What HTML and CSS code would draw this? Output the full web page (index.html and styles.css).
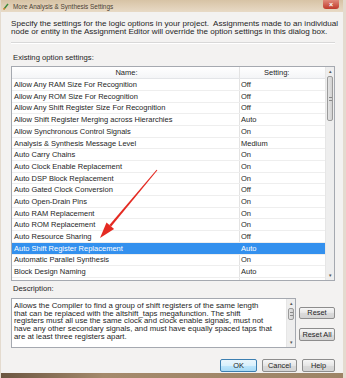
FILE: index.html
```html
<!DOCTYPE html>
<html lang="en">
  <head>
    <meta charset="UTF-8" />
    <title>More Analysis &amp; Synthesis Settings</title>
    <link rel="stylesheet" href="styles.css">
  </head>
  <body>
    <div class="window">
      <!-- Title bar -->
      <div class="titlebar">
        <svg class="app-icon" width="7" height="7" viewBox="0 0 7 7">
          <path d="M1 6 L5 1" stroke="#3a8a3a" stroke-width="1.4" />
          <path d="M0.5 6.5 L2 5" stroke="#d08020" stroke-width="1.4" />
        </svg>
        <span class="title">More Analysis &amp; Synthesis Settings</span>
        <span class="close"><span class="close-x">&#215;</span></span>
      </div>

      <div class="content">
        <p class="intro">
          Specify the settings for the logic options in your project.&nbsp; Assignments made to an individual<br>
          node or entity in the Assignment Editor will override the option settings in this dialog box.
        </p>
        <div class="sep"></div>

        <div class="label label-top">Existing option settings:</div>
        <div class="listbox">
          <div class="grid">
            <div class="head">
              <div class="col-name">Name:</div>
              <div class="col-set">Setting:</div>
            </div>
            <div class="rows">
              <div class="row"><div class="col-name">Allow Any RAM Size For Recognition</div><div class="col-set">Off</div></div>
              <div class="row"><div class="col-name">Allow Any ROM Size For Recognition</div><div class="col-set">Off</div></div>
              <div class="row"><div class="col-name">Allow Any Shift Register Size For Recognition</div><div class="col-set">Off</div></div>
              <div class="row"><div class="col-name">Allow Shift Register Merging across Hierarchies</div><div class="col-set">Auto</div></div>
              <div class="row"><div class="col-name">Allow Synchronous Control Signals</div><div class="col-set">On</div></div>
              <div class="row"><div class="col-name">Analysis &amp; Synthesis Message Level</div><div class="col-set">Medium</div></div>
              <div class="row"><div class="col-name">Auto Carry Chains</div><div class="col-set">On</div></div>
              <div class="row"><div class="col-name">Auto Clock Enable Replacement</div><div class="col-set">On</div></div>
              <div class="row"><div class="col-name">Auto DSP Block Replacement</div><div class="col-set">On</div></div>
              <div class="row"><div class="col-name">Auto Gated Clock Conversion</div><div class="col-set">Off</div></div>
              <div class="row"><div class="col-name">Auto Open-Drain Pins</div><div class="col-set">On</div></div>
              <div class="row"><div class="col-name">Auto RAM Replacement</div><div class="col-set">On</div></div>
              <div class="row"><div class="col-name">Auto ROM Replacement</div><div class="col-set">On</div></div>
              <div class="row"><div class="col-name">Auto Resource Sharing</div><div class="col-set">Off</div></div>
              <div class="row selected"><div class="col-name">Auto Shift Register Replacement</div><div class="col-set">Auto</div></div>
              <div class="row"><div class="col-name">Automatic Parallel Synthesis</div><div class="col-set">On</div></div>
              <div class="row"><div class="col-name">Block Design Naming</div><div class="col-set">Auto</div></div>
              <div class="row"><div class="col-name"></div><div class="col-set"></div></div>
            </div>
          </div>
          <div class="vscroll">
            <div class="sb-btn">&#9652;</div>
            <div class="sb-thumb"><span class="grip"></span></div>
            <div class="sb-track"></div>
            <div class="sb-btn">&#9662;</div>
          </div>
        </div>

        <div class="label label-desc">Description:</div>
        <div class="desc-area">
          <div class="desc-box">
            <p class="desc-text">
              Allows the Compiler to find a group of shift registers of the same length<br>
              that can be replaced with the altshift_taps megafunction. The shift<br>
              registers must all use the same clock and clock enable signals, must not<br>
              have any other secondary signals, and must have equally spaced taps that<br>
              are at least three registers apart.
            </p>
            <div class="vscroll vscroll-small">
              <div class="sb-btn">&#9652;</div>
              <div class="sb-thumb sb-thumb-small"><span class="grip"></span></div>
              <div class="sb-track"></div>
              <div class="sb-btn">&#9662;</div>
            </div>
          </div>
          <div class="side-buttons">
            <button class="btn btn-reset">Reset</button>
            <button class="btn btn-reset-all">Reset All</button>
          </div>
        </div>

        <div class="footer">
          <button class="btn btn-ok">OK</button>
          <button class="btn btn-cancel">Cancel</button>
          <button class="btn btn-help">Help</button>
        </div>
      </div>
      <div class="bottom-strip"></div>

      <!-- Red annotation arrow drawn over the list -->
      <svg class="annotation" width="346" height="378" viewBox="0 0 346 378">
        <polygon points="157.4,170.3 156.6,169.7 109.4,224.9 111.2,226.5" fill="#e42a22" />
        <polygon points="100,238 114.1,228.9 106.5,222.5" fill="#e42a22" />
      </svg>
    </div>
  </body>
</html>
```

FILE: styles.css
```css
* {
  margin: 0;
  padding: 0;
  box-sizing: border-box;
}

body {
  width: 346px;
  height: 378px;
  overflow: hidden;
  font-family: "Liberation Sans", Arial, sans-serif;
  font-size: 7.5px;
  color: #1e1e1e;
  background: #8a7158;
}

.window {
  position: relative;
  width: 346px;
  height: 378px;
  display: flex;
  flex-direction: column;
  background: #f3f2f1;
  border-right: 3px solid #e4dbcf;
  border-left: 1px solid #e4dbcf;
}

/* Title bar */
.titlebar {
  height: 12px;
  display: flex;
  align-items: center;
  padding-left: 2px;
  background: linear-gradient(#d7c3a5, #e8dac6);
}
.app-icon {
  margin-right: 3px;
}
.title {
  font-size: 6.4px;
  color: #4a3f33;
}
.close {
  margin-left: auto;
  margin-right: 4px;
  align-self: flex-start;
  width: 16px;
  height: 9px;
  border-radius: 0 0 3px 3px;
  background: linear-gradient(#e0897a, #c0392b);
  display: flex;
  align-items: center;
  justify-content: center;
}
.close-x {
  color: #fff;
  font-size: 7px;
  line-height: 7px;
  font-weight: bold;
}

/* Dialog content */
.content {
  height: 361px;
  padding: 0 8px 0 10px;
  display: flex;
  flex-direction: column;
}

.intro {
  margin-top: 8px;
  font-size: 8.1px;
  line-height: 8.4px;
  white-space: nowrap;
}

.sep {
  margin-top: 5px;
  height: 2px;
  border-top: 1px solid #d8d8d8;
  border-bottom: 1px solid #ffffff;
}

.label {
  line-height: 8.4px;
  padding-left: 2px;
  font-size: 7.7px;
}
.label-top {
  margin-top: 10px;
}
.label-desc {
  margin-top: 4px;
}

/* Option list */
.listbox {
  margin-top: 4px;
  height: 215px;
  border: 1px solid #a5a9b0;
  background: #ffffff;
  display: flex;
  overflow: hidden;
}
.grid {
  flex: 1;
  overflow: hidden;
}
.head {
  height: 12px;
  display: flex;
  align-items: center;
  background: linear-gradient(#ffffff, #f4f5f7);
  border-bottom: 1px solid #e3e5e8;
}
.row {
  height: 11.7px;
  display: flex;
  align-items: center;
  border-bottom: 1px solid #eeeeee;
}
.col-name {
  width: 228px;
  padding-left: 2px;
  white-space: nowrap;
  overflow: hidden;
  border-right: 1px solid #e3e3e3;
  height: 100%;
  display: flex;
  align-items: center;
}
.head .col-name {
  justify-content: center;
}
.col-set {
  flex: 1;
  padding-left: 1px;
}
.head .col-set {
  padding-left: 24px;
}
.row.selected {
  background: #3390ee;
  color: #ffffff;
}
.row.selected .col-name {
  border-right-color: #3390ee;
}

/* Scrollbars */
.vscroll {
  width: 9px;
  display: flex;
  flex-direction: column;
  background: #eeeeee;
  border-left: 1px solid #e6e6e6;
}
.sb-btn {
  height: 9px;
  font-size: 5px;
  line-height: 9px;
  text-align: center;
  color: #555555;
}
.sb-thumb {
  height: 45px;
  margin: 0 1px;
  border: 1px solid #9b9b9b;
  border-radius: 2px;
  background: linear-gradient(90deg, #e4e4e4, #d2d2d2);
  display: flex;
  align-items: center;
  justify-content: center;
}
.sb-thumb-small {
  height: 12px;
}
.grip {
  width: 3px;
  height: 4px;
  border-top: 1px solid #8a8a8a;
  border-bottom: 1px solid #8a8a8a;
}
.sb-track {
  flex: 1;
}

/* Description */
.desc-area {
  margin-top: 4px;
  display: flex;
  gap: 3px;
}
.desc-box {
  width: 285px;
  height: 50px;
  border: 1px solid #a5a9b0;
  background: #ffffff;
  display: flex;
}
.desc-text {
  flex: 1;
  padding: 3px 2px 0 2px;
  line-height: 7.9px;
  font-size: 7.8px;
  white-space: nowrap;
  overflow: hidden;
}
.vscroll-small {
  width: 9px;
}

.side-buttons {
  flex: 1;
  display: flex;
  flex-direction: column;
  padding-top: 9px;
}

/* Buttons */
.btn {
  font-family: "Liberation Sans", Arial, sans-serif;
  font-size: 7.4px;
  color: #1e1e1e;
  border: 1px solid #8d8d8d;
  border-radius: 2px;
  background: linear-gradient(#f6f6f6, #e6e6e6 50%, #dadada 51%, #d4d4d4);
}
.btn-reset {
  height: 12px;
}
.btn-reset-all {
  height: 13px;
  margin-top: 9px;
}

.footer {
  margin-top: 11px;
  display: flex;
  justify-content: flex-end;
  gap: 5px;
}
.footer .btn {
  height: 13px;
}
.btn-ok {
  width: 37px;
  border-color: #3c7fb1;
  background: linear-gradient(#eaf6fd, #d9f0fc 50%, #bee6fd 51%, #a7d9f5);
}
.btn-cancel {
  width: 35px;
}
.btn-help {
  width: 33px;
}

.bottom-strip {
  height: 5px;
  background: linear-gradient(90deg, #6b5641, #a48a6c 30%, #9d8466);
}

.annotation {
  position: absolute;
  left: -1px;
  top: 0;
  pointer-events: none;
}
```
